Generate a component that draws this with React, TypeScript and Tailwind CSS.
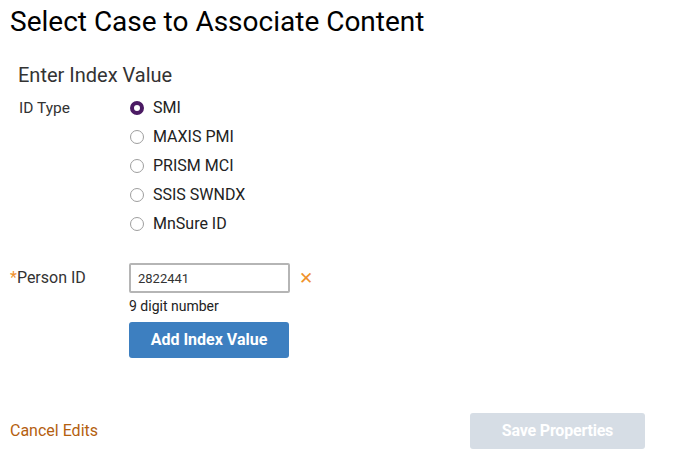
import React, { useState } from "react";

const ID_TYPES = ["SMI", "MAXIS PMI", "PRISM MCI", "SSIS SWNDX", "MnSure ID"];

function Radio({ checked }: { checked: boolean }) {
  return checked ? (
    <span className="w-[14px] h-[14px] rounded-full border-[4px] border-[#4b1a63] bg-white shrink-0" />
  ) : (
    <span className="w-[14px] h-[14px] rounded-full border-[1.5px] border-[#9e9e9e] bg-white shrink-0" />
  );
}

export default function App() {
  const [idType, setIdType] = useState("SMI");
  const [personId, setPersonId] = useState("2822441");

  return (
    <div
      className="w-[678px] h-[466px] bg-white text-[#222]"
      style={{ fontFamily: "Roboto, 'Liberation Sans', sans-serif" }}
    >
      <h1 className="pl-[10px] pt-[4px] text-[28px] leading-[36px] text-black">
        Select Case to Associate Content
      </h1>

      <div className="pl-[18px] pt-[22px]">
        <h2 className="text-[20px] leading-[26px] text-[#333]">Enter Index Value</h2>
      </div>

      <div className="flex pl-[19px] pt-[9px]">
        <div className="w-[111px] text-[15.5px] leading-[22px] text-[#333]">ID Type</div>
        <div className="flex flex-col gap-[9px] pt-[1px]">
          {ID_TYPES.map((t) => (
            <label
              key={t}
              className="flex items-center gap-[9px] h-[20px] text-[16px] text-[#222] cursor-pointer"
              onClick={() => setIdType(t)}
            >
              <Radio checked={idType === t} />
              <span>{t}</span>
            </label>
          ))}
        </div>
      </div>

      <div className="flex pl-[10px] pt-[29px]">
        <div className="w-[119px] text-[16px] leading-[20px] text-[#333] pt-[5px]">
          <span className="text-[#f0922c]">*</span>Person ID
        </div>
        <div className="flex flex-col">
          <div className="flex items-center">
            <input
              value={personId}
              onChange={(e) => setPersonId(e.target.value)}
              className="w-[161px] h-[30px] border-2 border-[#b5b5b5] rounded-[2px] px-[7px] text-[13px] text-[#333] outline-none"
            />
            <span className="ml-[9px] text-[#f0922c] text-[17px] leading-none">✕</span>
          </div>
          <div className="text-[14px] leading-[16px] text-[#222] pt-[5px]">9 digit number</div>
          <button className="mt-[8px] w-[160px] h-[36px] bg-[#3d7fc0] rounded-[3px] text-white font-bold text-[16px]">
            Add Index Value
          </button>
        </div>
      </div>

      <div className="flex items-center justify-between pl-[10px] pr-[33px] pt-[55px]">
        <a className="text-[16px] text-[#b4600f] cursor-pointer">Cancel Edits</a>
        <button
          disabled
          className="w-[175px] h-[36px] bg-[#d6dde5] rounded-[3px] text-white font-bold text-[16px] tracking-[-0.2px]"
        >
          Save Properties
        </button>
      </div>
    </div>
  );
}
